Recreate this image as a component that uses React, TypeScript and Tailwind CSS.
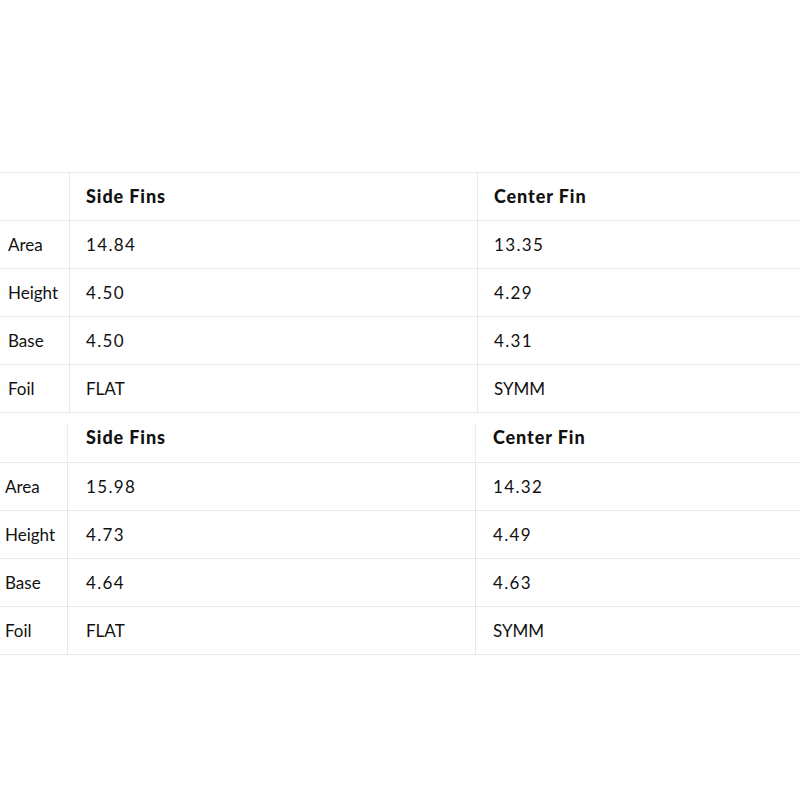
const specs = [
  {
    rows: [
      ['Area', '14.84', '13.35'],
      ['Height', '4.50', '4.29'],
      ['Base', '4.50', '4.31'],
      ['Foil', 'FLAT', 'SYMM'],
    ],
  },
  {
    rows: [
      ['Area', '15.98', '14.32'],
      ['Height', '4.73', '4.49'],
      ['Base', '4.64', '4.63'],
      ['Foil', 'FLAT', 'SYMM'],
    ],
  },
];

// numbers look wider in the original face, so give them some tracking
const val = (v: string) => (/^[\d.]+$/.test(v) ? 'tracking-[0.08em]' : '');

export default function App() {
  return (
    <div className="w-[800px] h-[800px] bg-white overflow-hidden pt-[172px] text-[#111] font-['Lato',sans-serif] text-[17px]">
      {/* first table */}
      <div className="border-t border-[#e8e8e8]">
        <div className="grid grid-cols-[70px_408px_322px] h-[48px] border-b border-[#e8e8e8]">
          <div className="border-r border-[#e8e8e8]" />
          <div className="border-r border-[#e8e8e8] pl-4 flex items-center font-black text-[18px] tracking-[0.05em]">Side Fins</div>
          <div className="pl-4 flex items-center font-black text-[18px] tracking-[0.05em]">Center Fin</div>
        </div>
        {specs[0].rows.map((r) => (
          <div key={r[0]} className="grid grid-cols-[70px_408px_322px] h-[48px] border-b border-[#e8e8e8]">
            <div className="border-r border-[#e8e8e8] pl-2 flex items-center">{r[0]}</div>
            <div className={`border-r border-[#e8e8e8] pl-4 flex items-center ${val(r[1])}`}>{r[1]}</div>
            <div className={`pl-4 flex items-center ${val(r[2])}`}>{r[2]}</div>
          </div>
        ))}
      </div>

      {/* second table */}
      <div>
        <div className="grid grid-cols-[68px_408px_324px] h-[50px] border-b border-[#e8e8e8]">
          <div className="pt-[11px] flex">
            <div className="ml-auto w-px bg-[#ececec]" />
          </div>
          <div className="relative pl-[18px] flex items-center font-black text-[18px] tracking-[0.05em]">
            Side Fins
            <div className="absolute right-0 top-[11px] bottom-0 w-px bg-[#ececec]" />
          </div>
          <div className="pl-[17px] flex items-center font-black text-[18px] tracking-[0.05em]">Center Fin</div>
        </div>
        {specs[1].rows.map((r) => (
          <div key={r[0]} className="grid grid-cols-[68px_408px_324px] h-[48px] border-b border-[#e8e8e8]">
            <div className="border-r border-[#e8e8e8] pl-[5px] flex items-center">{r[0]}</div>
            <div className={`border-r border-[#e8e8e8] pl-[18px] flex items-center ${val(r[1])}`}>{r[1]}</div>
            <div className={`pl-[17px] flex items-center ${val(r[2])}`}>{r[2]}</div>
          </div>
        ))}
      </div>
    </div>
  );
}
